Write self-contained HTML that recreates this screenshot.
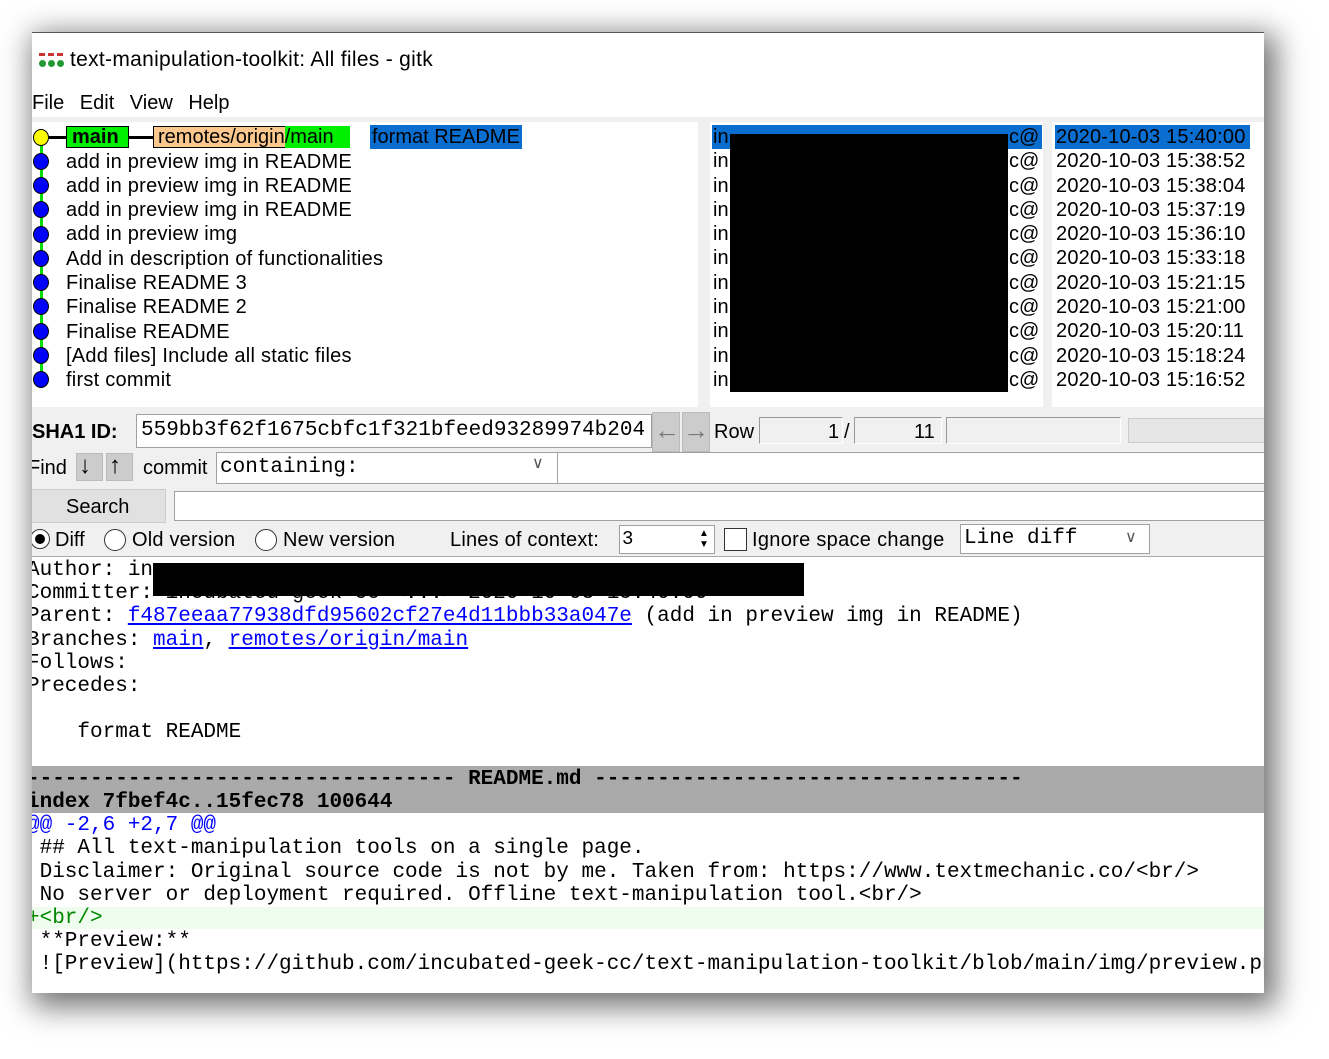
<!DOCTYPE html>
<html><head><meta charset="utf-8"><style>
*{margin:0;padding:0;box-sizing:border-box}
body{width:1329px;height:1059px;background:#fff;position:relative;overflow:hidden;font-family:"Liberation Sans",Arial,sans-serif;color:#000}
.win{position:absolute;left:32px;top:32px;width:1232px;height:961px;background:#f0f0f0;overflow:hidden;box-shadow:6px 8px 28px 6px rgba(0,0,0,.55);border-top:1px solid #555}
.a{position:absolute;white-space:nowrap}
.s{font-size:20px;line-height:24px}
.m{font-family:"Liberation Mono","Courier New",monospace;font-size:21px;line-height:23px}
.box{position:absolute;background:#fff;border:1px solid #a0a0a0}
.btn{position:absolute;background:#ccc;border:1px solid #bbb}
.dot{position:absolute;width:16px;height:17px;border-radius:50%;background:#00f;border:1px solid #000}
a{color:#00f;text-decoration:underline}
</style></head><body>
<div class="win">
 <div class="a" style="left:0;top:0;width:1232px;height:84px;background:#fff"></div>
 <div class="a" style="left:7px;top:20px;width:24px;height:14px">
  <div class="a" style="left:0;top:0;width:6px;height:3px;background:#c33"></div><div class="a" style="left:9px;top:0;width:6px;height:3px;background:#c33"></div><div class="a" style="left:18px;top:0;width:6px;height:3px;background:#c33"></div>
  <div class="a" style="left:0;top:7px;width:7px;height:7px;border-radius:50%;background:#293"></div><div class="a" style="left:9px;top:7px;width:7px;height:7px;border-radius:50%;background:#293"></div><div class="a" style="left:18px;top:7px;width:7px;height:7px;border-radius:50%;background:#293"></div>
 </div>
 <div class="a s" style="left:38px;top:15px;font-size:21px;letter-spacing:0.3px">text-manipulation-toolkit: All files - gitk</div>
 <div class="a s" style="left:0;top:58px;word-spacing:10px">File Edit View Help</div>
 <div class="a" style="left:0;top:89px;width:666px;height:285px;background:#fff"></div>
 <div class="a" style="left:678px;top:89px;width:333px;height:285px;background:#fff"></div>
 <div class="a" style="left:1020px;top:89px;width:212px;height:285px;background:#fff"></div>
 <div class="a" style="left:8px;top:104px;width:3px;height:243px;background:#0d0"></div>
 <div class="dot" style="left:1px;top:96px;background:#ff0"></div>
 <div class="dot" style="left:1px;top:120px"></div><div class="dot" style="left:1px;top:144px"></div><div class="dot" style="left:1px;top:168px"></div><div class="dot" style="left:1px;top:193px"></div><div class="dot" style="left:1px;top:217px"></div><div class="dot" style="left:1px;top:241px"></div><div class="dot" style="left:1px;top:265px"></div><div class="dot" style="left:1px;top:290px"></div><div class="dot" style="left:1px;top:314px"></div><div class="dot" style="left:1px;top:338px"></div>
 <div class="a" style="left:17px;top:103px;width:106px;height:3px;background:#000"></div>
 <div class="a s" style="left:34px;top:93px;width:63px;height:22px;background:#0e0;border:1px solid #000;font-weight:bold;padding-left:5px;line-height:20px">main</div>
 <div class="a s" style="left:121px;top:93px;width:196px;height:22px;background:#fcc88e;border:1px solid #000;padding-left:4px;line-height:20px">remotes/origin<span style="background:#0e0">/main&nbsp;&nbsp;&nbsp;</span></div>
 <div class="a s" style="left:338px;top:92px;background:#0a6ed1;padding:0 2px">format README</div>
 <div class="a s" style="left:34px;top:116.5px;line-height:24.3px;letter-spacing:0.25px">add in preview img in README<br>add in preview img in README<br>add in preview img in README<br>add in preview img<br>Add in description of functionalities<br>Finalise README 3<br>Finalise README 2<br>Finalise README<br>[Add files] Include all static files<br>first commit</div>
 <div class="a" style="left:680px;top:92px;width:330px;height:24px;background:#0a6ed1"></div>
 <div class="a s" style="left:681px;top:92px;line-height:24.3px">in<br>in<br>in<br>in<br>in<br>in<br>in<br>in<br>in<br>in<br>in</div>
 <div class="a s" style="left:977px;top:92px;line-height:24.3px">c@<br>c@<br>c@<br>c@<br>c@<br>c@<br>c@<br>c@<br>c@<br>c@<br>c@</div>
 <div class="a" style="left:698px;top:101px;width:278px;height:258px;background:#000"></div>
 <div class="a" style="left:1023px;top:92px;width:195px;height:24px;background:#0a6ed1"></div>
 <div class="a s" style="left:1024px;top:92px;line-height:24.3px;letter-spacing:0.2px">2020-10-03 15:40:00<br>2020-10-03 15:38:52<br>2020-10-03 15:38:04<br>2020-10-03 15:37:19<br>2020-10-03 15:36:10<br>2020-10-03 15:33:18<br>2020-10-03 15:21:15<br>2020-10-03 15:21:00<br>2020-10-03 15:20:11<br>2020-10-03 15:18:24<br>2020-10-03 15:16:52</div>
 <div class="a s" style="left:0;top:387px;font-weight:bold">SHA1 ID:</div>
 <div class="box" style="left:104px;top:381px;width:516px;height:34px"></div>
 <div class="a m" style="left:109px;top:386px">559bb3f62f1675cbfc1f321bfeed93289974b204</div>
 <div class="btn" style="left:620px;top:379px;width:28px;height:40px"></div>
 <div class="btn" style="left:650px;top:379px;width:28px;height:40px"></div>
 <div class="a s" style="left:622px;top:385px;color:#777;font-size:26px;font-weight:bold">←</div>
 <div class="a s" style="left:651px;top:385px;color:#777;font-size:26px;font-weight:bold">→</div>
 <div class="a s" style="left:682px;top:387px">Row</div>
 <div class="a" style="left:727px;top:384px;width:84px;height:27px;border:1px solid #999;border-right-color:#fff;border-bottom-color:#fff"></div>
 <div class="a s" style="left:796px;top:387px">1</div><div class="a s" style="left:812px;top:387px">/</div>
 <div class="a" style="left:822px;top:384px;width:88px;height:27px;border:1px solid #999;border-right-color:#fff;border-bottom-color:#fff"></div>
 <div class="a s" style="left:882px;top:387px">11</div>
 <div class="a" style="left:914px;top:384px;width:175px;height:27px;border:1px solid #999;border-right-color:#fff;border-bottom-color:#fff"></div>
 <div class="a" style="left:1096px;top:385px;width:140px;height:25px;border:1px solid #ccc;background:#e6e6e6"></div>
 <div class="a s" style="left:-4px;top:423px">Find</div>
 <div class="btn" style="left:44px;top:420px;width:27px;height:28px"></div>
 <div class="btn" style="left:74px;top:420px;width:27px;height:28px"></div>
 <div class="a s" style="left:47px;top:421px;font-size:24px;font-weight:bold">↓</div>
 <div class="a s" style="left:77px;top:421px;font-size:24px;font-weight:bold">↑</div>
 <div class="a s" style="left:111px;top:423px">commit</div>
 <div class="box" style="left:184px;top:419px;width:342px;height:32px"></div>
 <div class="a m" style="left:188px;top:423px">containing:</div>
 <div class="a" style="left:500px;top:420px;font-size:16px;color:#555">&#8744;</div>
 <div class="box" style="left:525px;top:419px;width:720px;height:32px"></div>
 <div class="a" style="left:-5px;top:456px;width:139px;height:34px;background:#e1e1e1;border:1px solid #ccc"></div>
 <div class="a s" style="left:34px;top:462px">Search</div>
 <div class="box" style="left:142px;top:458px;width:1100px;height:30px"></div>
 <div class="a" style="left:-2px;top:496px;width:20px;height:20px;border-radius:50%;border:1px solid #333;background:#fff"></div>
 <div class="a" style="left:3px;top:501px;width:10px;height:10px;border-radius:50%;background:#000"></div>
 <div class="a s" style="left:23px;top:495px">Diff</div>
 <div class="a" style="left:72px;top:496px;width:22px;height:22px;border-radius:50%;border:1px solid #333;background:#fff"></div>
 <div class="a s" style="left:100px;top:495px;letter-spacing:0.2px">Old version</div>
 <div class="a" style="left:223px;top:496px;width:22px;height:22px;border-radius:50%;border:1px solid #333;background:#fff"></div>
 <div class="a s" style="left:251px;top:495px;letter-spacing:0.2px">New version</div>
 <div class="a s" style="left:418px;top:495px;letter-spacing:0.2px">Lines of context:</div>
 <div class="box" style="left:587px;top:492px;width:96px;height:29px"></div>
 <div class="a m" style="left:590px;top:495px;font-size:19px">3</div>
 <div class="a" style="left:667px;top:495px;font-size:10px;line-height:11px">▲<br>▼</div>
 <div class="a" style="left:692px;top:495px;width:23px;height:23px;border:1px solid #333;background:#fff"></div>
 <div class="a s" style="left:720px;top:495px;letter-spacing:0.3px">Ignore space change</div>
 <div class="box" style="left:928px;top:491px;width:190px;height:30px"></div>
 <div class="a m" style="left:932px;top:494px">Line diff</div>
 <div class="a" style="left:1093px;top:494px;font-size:16px;color:#555">&#8744;</div>
 <div class="a" style="left:0;top:523px;width:1232px;height:438px;background:#fff;border-top:1px solid #aaa"></div>
 <div class="a" style="left:0;top:733px;width:1232px;height:47px;background:#aaa"></div>
 <div class="a" style="left:0;top:874px;width:1232px;height:22px;background:#effdef"></div>
 <div class="a m" style="left:-5px;top:525px;line-height:23.2px;margin-top:1px"><div>Author: in</div><div>Committer: incubated-geek-cc &lt;...&gt; 2020-10-03 15:40:00</div><div>Parent: <a>f487eeaa77938dfd95602cf27e4d11bbb33a047e</a> (add in preview img in README)</div><div>Branches: <a>main</a>, <a>remotes/origin/main</a></div><div>Follows:</div><div>Precedes:</div><div>&nbsp;</div><div>&nbsp;&nbsp;&nbsp;&nbsp;format README</div><div>&nbsp;</div><div style="font-weight:bold">---------------------------------- README.md ----------------------------------</div><div style="font-weight:bold">index 7fbef4c..15fec78 100644</div><div style="color:#00f">@@ -2,6 +2,7 @@</div><div>&nbsp;## All text-manipulation tools on a single page.</div><div>&nbsp;Disclaimer: Original source code is not by me. Taken from: https://www.textmechanic.co/&lt;br/&gt;</div><div>&nbsp;No server or deployment required. Offline text-manipulation tool.&lt;br/&gt;</div><div style="color:#080">+&lt;br/&gt;</div><div>&nbsp;**Preview:**</div><div>&nbsp;![Preview](https://github.com/incubated-geek-cc/text-manipulation-toolkit/blob/main/img/preview.png)</div></div>
 <div class="a" style="left:121px;top:530px;width:651px;height:33px;background:#000"></div>
</div>
</body></html>
